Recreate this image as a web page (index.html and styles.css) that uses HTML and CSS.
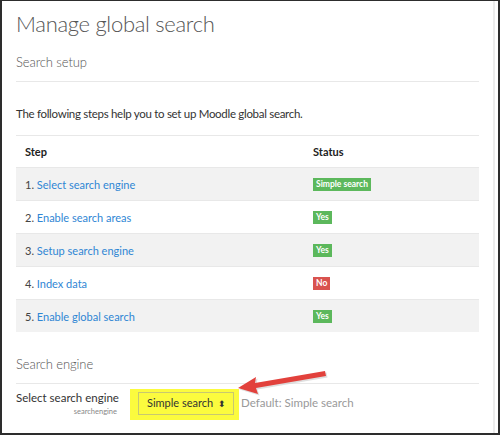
FILE: index.html
```html
<!DOCTYPE html>
<html lang="en">
<head>
    <meta charset="UTF-8">
    <title>Manage global search</title>
    <link rel="stylesheet" href="styles.css">
</head>
<body>
    <div class="frame">
        <div class="page">
            <h2 class="page-title">Manage global search</h2>
            <h3 class="section-title">Search setup</h3>
            <p class="intro">The following steps help you to set up Moodle global search.</p>

            <table class="steps">
                <thead>
                    <tr>
                        <th class="col-step">Step</th>
                        <th>Status</th>
                    </tr>
                </thead>
                <tbody>
                    <tr>
                        <td>1. <a href="#">Select search engine</a></td>
                        <td><span class="badge badge-ok">Simple search</span></td>
                    </tr>
                    <tr>
                        <td>2. <a href="#">Enable search areas</a></td>
                        <td><span class="badge badge-ok">Yes</span></td>
                    </tr>
                    <tr>
                        <td>3. <a href="#">Setup search engine</a></td>
                        <td><span class="badge badge-ok">Yes</span></td>
                    </tr>
                    <tr>
                        <td>4. <a href="#">Index data</a></td>
                        <td><span class="badge badge-no">No</span></td>
                    </tr>
                    <tr>
                        <td>5. <a href="#">Enable global search</a></td>
                        <td><span class="badge badge-ok">Yes</span></td>
                    </tr>
                </tbody>
            </table>

            <h3 class="section-title engine-title">Search engine</h3>

            <div class="setting">
                <div class="setting-label">
                    <label for="searchengine">Select search engine</label>
                    <span class="setting-name">searchengine</span>
                </div>
                <div class="highlight">
                    <div class="select-box">Simple search <span class="select-arrows">&#x2B0D;</span></div>
                </div>
                <div class="setting-default">Default: Simple search</div>

                <!-- red callout arrow drawn over the form -->
                <svg class="callout" width="100" height="30" viewBox="0 0 100 30">
                    <path d="M4 21 L22 10 L21 16 L91 4 L92 9 L22 21 L24 27 Z" fill="#c9c9c9" opacity="0.6" transform="translate(1.5,1.5)"/>
                    <path d="M4 21 L22 10 L21 16 L91 4 L92 9 L22 21 L24 27 Z" fill="#e2413c"/>
                </svg>
            </div>
        </div>
        <div class="gutter"></div>
    </div>
</body>
</html>
```

FILE: styles.css
```css
body {
    margin: 0;
    font-family: Lato, "Open Sans", sans-serif;
    color: #373a3c;
    background-color: white;
}

.frame {
    display: flex;
    width: 500px;
    height: 435px;
    box-sizing: border-box;
    border: 2px solid #2d2d2d;
    border-top-width: 1px;
    overflow: hidden;
}

.page {
    flex: 1;
    padding: 0 14px;
}

.gutter {
    width: 2px;
    margin-right: 3px;
    background-color: #ececec;
}

.page-title {
    margin: 7px 0 0 0;
    font-size: 22px;
    font-weight: 300;
    letter-spacing: -0.3px;
    line-height: 32px;
    color: #555;
}

.section-title {
    margin: 12px 0 0 0;
    padding-bottom: 9px;
    font-size: 13px;
    font-weight: 300;
    letter-spacing: -0.1px;
    line-height: 20px;
    color: #555;
    border-bottom: 1px solid #e8e8e8;
}

.intro {
    margin: 23px 0 0 0;
    font-size: 11.5px;
    letter-spacing: -0.3px;
    line-height: 18px;
    color: #333;
}

/* steps table */
.steps {
    width: 100%;
    margin-top: 12px;
    border-collapse: collapse;
    font-size: 11px;
}

.steps th,
.steps td {
    text-align: left;
    padding: 0 9px;
    height: 32px;
    border-top: 1px solid #e8e8e8;
}

.steps th {
    height: 31px;
    font-weight: bold;
    color: #222;
}

.steps .col-step {
    width: 270px;
}

.steps tbody tr:nth-child(odd) {
    background-color: #f2f2f2;
}

.steps td {
    color: #444;
}

.steps a {
    color: #2f86d4;
    text-decoration: none;
}

.badge {
    display: inline-block;
    padding: 1px 3px;
    font-size: 8.5px;
    font-weight: bold;
    line-height: 11px;
    color: white;
    vertical-align: middle;
}

.badge-ok {
    background-color: #5cb85c;
}

.badge-no {
    background-color: #d9534f;
}

.engine-title {
    margin-top: 22px;
}

/* setting row */
.setting {
    position: relative;
    display: flex;
    align-items: flex-start;
    margin-top: 5px;
}

.setting-label {
    width: 101px;
    text-align: right;
    font-size: 11.5px;
    color: #333;
    padding-top: 1px;
    white-space: nowrap;
}

.setting-label label {
    display: block;
    line-height: 16px;
}

.setting-name {
    display: block;
    font-size: 7.5px;
    line-height: 12px;
    color: #888;
}

.highlight {
    margin-left: 13px;
    padding: 3px 5px 5px 8px;
    background-color: #fbfb3e;
}

.select-box {
    padding: 3px 7px 3px 8px;
    border: 1px solid #c8c870;
    font-size: 11px;
    line-height: 14px;
    color: #333;
    white-space: nowrap;
}

.select-arrows {
    font-size: 9px;
    margin-left: 2px;
}

.setting-default {
    padding-top: 7px;
    padding-left: 2px;
    font-size: 11.5px;
    color: #999;
    white-space: nowrap;
}

.callout {
    position: absolute;
    left: 218px;
    top: -22px;
}
```
